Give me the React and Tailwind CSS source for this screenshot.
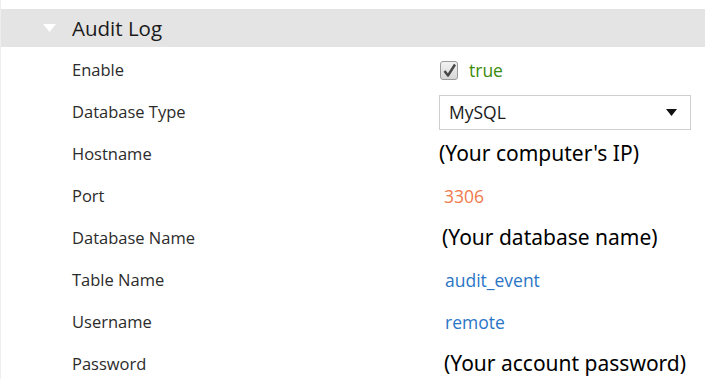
import React from 'react';

const rows = [
  { label: 'Enable', kind: 'check' },
  { label: 'Database Type', kind: 'select' },
  { label: 'Hostname', kind: 'note', text: "(Your computer's IP)", shift: 'ml-0' },
  { label: 'Port', kind: 'num', text: '3306' },
  { label: 'Database Name', kind: 'note', text: '(Your database name)', shift: 'ml-[3px]' },
  { label: 'Table Name', kind: 'str', text: 'audit_event' },
  { label: 'Username', kind: 'str', text: 'remote' },
  { label: 'Password', kind: 'note', text: '(Your account password)', shift: 'ml-[5px]' },
];

function Value({ row }) {
  if (row.kind === 'check') {
    return (
      <div className="flex items-center gap-[11px] ml-[1px]">
        <span className="w-[18px] h-[19px] rounded-[3px] border border-[#9a9a9a] bg-gradient-to-b from-[#f2f2f2] to-[#d6d6d6] flex items-center justify-center">
          <svg width="15" height="15" viewBox="0 0 15 15">
            <path d="M2.5 8 L6 12.5 L13 1.5" fill="none" stroke="#474747" strokeWidth="2.4" strokeLinejoin="round" />
          </svg>
        </span>
        <span className="text-[#3b8b0c] text-[17.5px]">true</span>
      </div>
    );
  }
  if (row.kind === 'select') {
    return (
      <div className="w-[252px] h-[35px] border border-[#cfcfcf] bg-white flex items-center justify-between pl-[9px] pr-[13px]">
        <span className="text-[#1a1a1a] text-[17.5px]">MySQL</span>
        <svg width="11" height="7" viewBox="0 0 11 7">
          <path d="M0 0 H11 L5.5 7 Z" fill="#111" />
        </svg>
      </div>
    );
  }
  if (row.kind === 'note') {
    return <span className={`text-black text-[21px] font-['Noto_Sans',sans-serif] ${row.shift}`}>{row.text}</span>;
  }
  if (row.kind === 'num') {
    return <span className="text-[#f07a4c] text-[17.5px] ml-[5px]">{row.text}</span>;
  }
  return <span className="text-[#2a76c6] text-[17.5px] ml-[6px]">{row.text}</span>;
}

export default function App() {
  return (
    <div className="w-[706px] h-[379px] bg-white overflow-hidden pt-[9px] border-l border-[#eeeeee] font-['Open_Sans',sans-serif]">
      <div className="h-[38px] bg-[#e4e4e4] flex items-center mr-[1px]">
        <svg className="ml-[42px]" width="13" height="8" viewBox="0 0 13 8">
          <path d="M0 0 H13 L6.5 8 Z" fill="#ffffff" />
        </svg>
        <span className="ml-[16px] text-[20.5px] text-[#1a1a1a]">Audit Log</span>
      </div>
      <div className="pt-[2px]">
        {rows.map(row => (
          <div key={row.label} className="h-[42px] flex items-center">
            <span className="w-[438px] shrink-0 pl-[71px] text-[16.5px] text-[#2b2b2b]">{row.label}</span>
            <Value row={row} />
          </div>
        ))}
      </div>
    </div>
  );
}
